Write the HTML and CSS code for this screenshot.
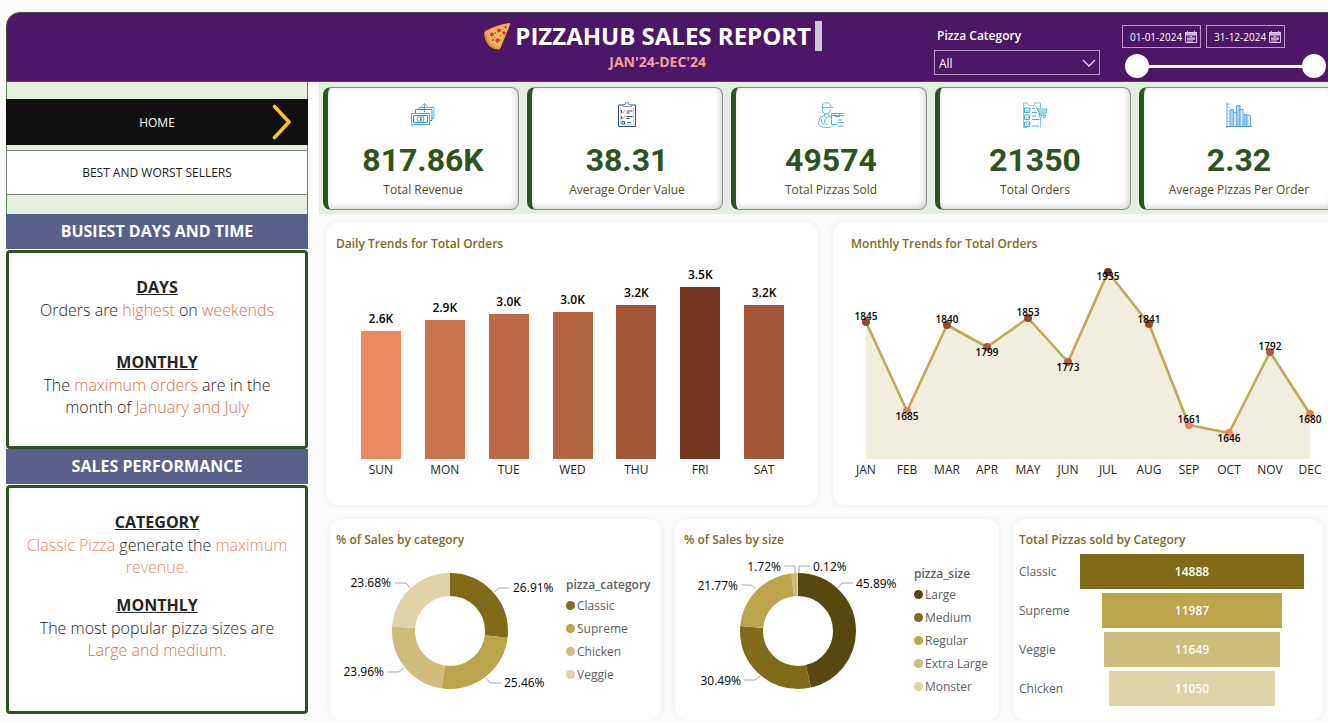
FILE: index.html
```html
<!DOCTYPE html>
<html lang="en">
<head>
<meta charset="utf-8">
<meta name="viewport" content="width=device-width, initial-scale=1">
<title>Pizzahub Sales Report</title>
<link rel="stylesheet" href="styles.css">
</head>
<body>
<div class="dashboard">
  <header class="header">
    <div class="brand">
      <h1 class="brand-title">
        <svg class="brand-icon" viewBox="0 0 28 28" aria-hidden="true">
          <path d="M3 13 C1 12 1 9 3.500 8.500 C10 5 17 2.500 26 1 C27.200 1 27.500 2 27 3 L17.500 26 C16.500 28 14 27.500 13 26.500 C8 25 4 20 3 13Z" fill="#f6a94f"/>
          <path d="M2 10 C3 17 8 24 15 27 C11 28 6 25 3.500 20 C1.500 16.500 .5 12 2 10Z" fill="#dd8a3c"/>
          <path d="M5 11 C6 17 10 22 16 24.500 L26 2Z" fill="#f9b95c"/>
          <g fill="#d33a35"><circle cx="9" cy="12.500" r="2"/><circle cx="14.500" cy="18.500" r="2.200"/><circle cx="16" cy="8.500" r="1.900"/><circle cx="21" cy="11" r="1.700"/><circle cx="22.500" cy="5" r="1.200"/><circle cx="10" cy="18" r="1.100"/></g>
          <g fill="#6c8a35"><circle cx="12.500" cy="11" r=".9"/><circle cx="17.500" cy="13.500" r=".9"/><circle cx="11.500" cy="15.500" r=".8"/><circle cx="19.500" cy="7.500" r=".8"/><circle cx="18" cy="18" r=".8"/></g>
        </svg>
        <span>PIZZAHUB SALES REPORT</span>
        <span class="caret"></span>
      </h1>
      <p class="brand-period">JAN'24-DEC'24</p>
    </div>
    <div class="filter">
      <label class="filter-label" for="category">Pizza Category</label>
      <div class="select-wrap">
        <select id="category" class="select"><option>All</option><option>Classic</option><option>Supreme</option><option>Veggie</option><option>Chicken</option></select>
        <svg class="select-arrow" viewBox="0 0 14 8" aria-hidden="true"><path d="M1 1 L7 7 L13 1" fill="none" stroke="#e8dcf0" stroke-width="1.300"/></svg>
      </div>
    </div>
    <div class="dates">
      <div class="date-row">
        <div class="date-field">
          <input class="date-input" type="text" value="01-01-2024" aria-label="Start date">
          <svg class="date-icon" viewBox="0 0 12 12" aria-hidden="true"><path d="M0 1h12v3H0z" fill="#c9a9da"/><path d="M.5 1.500h11v10H.5zM.5 4h11M2.500 0v2.500M9.500 0v2.500M3 11V5.500M5 11V5.500h2V11M9 5.500V9M2 8h8" fill="none" stroke="#e3c9ee"/></svg>
        </div>
        <div class="date-field">
          <input class="date-input" type="text" value="31-12-2024" aria-label="End date">
          <svg class="date-icon" viewBox="0 0 12 12" aria-hidden="true"><path d="M0 1h12v3H0z" fill="#c9a9da"/><path d="M.5 1.500h11v10H.5zM.5 4h11M2.500 0v2.500M9.500 0v2.500M3 11V5.500M5 11V5.500h2V11M9 5.500V9M2 8h8" fill="none" stroke="#e3c9ee"/></svg>
        </div>
      </div>
      <div class="slider">
        <input class="range" type="range" min="0" max="365" value="0" aria-label="Range start">
        <input class="range" type="range" min="0" max="365" value="365" aria-label="Range end">
      </div>
    </div>
  </header>

  <div class="body">
    <aside class="sidebar">
      <nav class="nav">
        <button class="nav-btn nav-btn-active" type="button">HOME
          <svg class="nav-arrow" viewBox="0 0 20 36" aria-hidden="true"><path d="M2.500 2.500 L17 18 L2.500 33.500" fill="none" stroke="#f8c51c" stroke-width="3.600" stroke-linecap="round" stroke-linejoin="round"/></svg>
        </button>
        <button class="nav-btn" type="button">BEST AND WORST SELLERS</button>
      </nav>
      <h2 class="side-title">BUSIEST DAYS AND TIME</h2>
      <section class="note note-busiest">
        <h3 class="note-title">DAYS</h3>
        <p>Orders are <em>highest</em> on <em>weekends</em></p>
        <h3 class="note-title">MONTHLY</h3>
        <p>The <em>maximum orders</em> are in the<br>month of <em>January and July</em></p>
      </section>
      <h2 class="side-title">SALES PERFORMANCE</h2>
      <section class="note note-sales">
        <h3 class="note-title">CATEGORY</h3>
        <p><em class="soft">Classic Pizza</em> generate the <em class="soft">maximum<br>revenue.</em></p>
        <h3 class="note-title">MONTHLY</h3>
        <p>The most popular pizza sizes are<br><em>Large and medium.</em></p>
      </section>
    </aside>

    <main class="main">
      <section class="kpis">
        <article class="kpi">
          <svg class="kpi-icon" viewBox="0 0 26 26" fill="none" stroke="#4aa8d8" aria-hidden="true"><path d="M1.500 11.500h18v11h-18z"/><path d="M5.500 11V7.500h16.500v11h-2.500M3.500 20.500v-7h14v7z" stroke="#2f93c8"/><path d="M9 7V5.500h15v11h-2.500" stroke="#5ab5e2"/><path d="M14.500 10V2.500M11.500 4.500l3-3 3 3"/><circle cx="10.500" cy="17" r="3.500"/><path d="M12 15.500h-2v1.500h1.500v1.500h-2M10.500 14.500v5"/><path d="M1.500 20v4h2" stroke="#8ccbea"/></svg>
          <strong class="kpi-value">817.86K</strong><span class="kpi-label">Total Revenue</span>
        </article>
        <article class="kpi">
          <svg class="kpi-icon" viewBox="0 0 26 26" fill="none" stroke="#33487f" aria-hidden="true"><path d="M9 3H4.500v21.500h17V3H17"/><path d="M9 4.500V2.500h2.500V.7h3v1.800H17v2z" stroke="#7e8db5"/><path d="M6.500 5v17.500h13V5" stroke="#c3cce2" stroke-width=".8"/><path d="M12.500 9h6M12.500 11h3M12.500 14.500h6M12.500 16.500h3M13.500 20.500h3.500"/><path d="M7.500 10l1.200 1.200 2.500-3.200M7.500 15.500l1.200 1.200 2.500-3.200" stroke="#e08a7c"/><path d="M7.500 8v3M7.500 14v3M8 19.500h2.500v2.500H8z" stroke="#4a4f6a"/></svg>
          <strong class="kpi-value">38.31</strong><span class="kpi-label">Average Order Value</span>
        </article>
        <article class="kpi">
          <svg class="kpi-icon" viewBox="0 0 26 26" fill="none" stroke="#45b8d2" aria-hidden="true"><path d="M4 5.500C4 2.500 6 .7 8.500 .7S12 2 12.500 4.500l2.500 1.200M4 5.500h8.500"/><path d="M4.500 6v2.500C5 11 6.500 12 8.500 12s3.500-1.500 3.500-4.500M6.500 12v2l2 2 2.500-2v-2M6.500 13.500C2.500 14 .7 17 .7 22c0 2.500 5 3.500 8.300 3.500 4 0 5.500-1 6-2M3.500 17c-.5 3 .5 5 3 6M7.500 16.500c-2 3.500-.5 6 2 6.500"/><path d="M26 11.500H13.500v11H19M13.500 13.500H26M17 11.500v3h4.500v-3M19 22.500l2-2h5M20 24h5.500M20 18h4M11 14l2.500 2"/></svg>
          <strong class="kpi-value">49574</strong><span class="kpi-label">Total Pizzas Sold</span>
        </article>
        <article class="kpi">
          <svg class="kpi-icon" viewBox="0 0 26 26" fill="none" stroke="#3fb3cd" aria-hidden="true"><path d="M6 1H1.500v24.500H5M12 1h6.500v5M18.500 16v9.500M5 1.500l2 2h4.500l2-2.500" stroke="#7dcbdc"/><path d="M2.500 6h5v4.500h-5zM2.500 13h5v4.500h-5zM2.500 20h5v4.500h-5zM10 10.500h5M10 17.500h7.500M10 24h7M10 6.500h3M10 14h4"/><path d="M4 8l1.500 1.500L8.500 6M4 15l1.500 1.500L8.500 13M4 22l1.500 1.500L8.500 20" stroke="#5bb9e0"/><path d="M14 5l2 2h9l-1 4h-7l-1.500-4M17.500 11v2h6.500M16.500 9h7"/><circle cx="18.500" cy="14.500" r="1.200"/><circle cx="22.500" cy="14.500" r="1.200"/></svg>
          <strong class="kpi-value">21350</strong><span class="kpi-label">Total Orders</span>
        </article>
        <article class="kpi">
          <svg class="kpi-icon" viewBox="0 0 26 26" fill="none" stroke="#64aae6" aria-hidden="true"><path d="M4 7.500h3.500v17H4zM10.500 3.500h3.500v21h-3.500zM18 12.500h3v12h-3z" fill="#9fd0f6"/><path d="M7.500 10.500h3v14h-3zM14 7.500h3v17h-3zM21 13.500h3.500v11H21z" fill="#d9edfc"/><path d="M1 .5V26M0 24.500h26" stroke="#5f9ed4"/><path d="M2 2h1.500M2 5.500h1.500M2 9h1.500M2 12.500h1.500M2 16h1.500M2 19.500h1.500" stroke="#7fb4e0"/></svg>
          <strong class="kpi-value">2.32</strong><span class="kpi-label">Average Pizzas Per Order</span>
        </article>
      </section>

      <div class="row row-trends">
        <section class="panel panel-daily">
          <h2 class="panel-title">Daily Trends for Total Orders</h2>
          <div class="bars">
            <div class="bar-col"><span class="bar-value">2.6K</span><div class="bar" style="height:128px;background:#eb895f"></div><span class="bar-day">SUN</span></div>
            <div class="bar-col"><span class="bar-value">2.9K</span><div class="bar" style="height:139px;background:#ca724c"></div><span class="bar-day">MON</span></div>
            <div class="bar-col"><span class="bar-value">3.0K</span><div class="bar" style="height:145px;background:#bb6845"></div><span class="bar-day">TUE</span></div>
            <div class="bar-col"><span class="bar-value">3.0K</span><div class="bar" style="height:147px;background:#b46441"></div><span class="bar-day">WED</span></div>
            <div class="bar-col"><span class="bar-value">3.2K</span><div class="bar" style="height:154px;background:#a35737"></div><span class="bar-day">THU</span></div>
            <div class="bar-col"><span class="bar-value">3.5K</span><div class="bar" style="height:172px;background:#73341d"></div><span class="bar-day">FRI</span></div>
            <div class="bar-col"><span class="bar-value">3.2K</span><div class="bar" style="height:154px;background:#a45838"></div><span class="bar-day">SAT</span></div>
          </div>
        </section>
        <section class="panel panel-monthly">
          <h2 class="panel-title">Monthly Trends for Total Orders</h2>
          <svg class="line-chart" viewBox="0 0 505 230" role="img" aria-label="Monthly total orders">
            <path d="M33 66 L74 155 L114 69 L154 91 L195 62 L235 106 L275 16 L316 68 L356 169 L396 177 L437 96 L477 158 V203 H33Z" fill="#f2eedd"/>
            <path d="M33 66 L74 155 L114 69 L154 91 L195 62 L235 106 L275 16 L316 68 L356 169 L396 177 L437 96 L477 158" fill="none" stroke="#bda956" stroke-width="2.600" stroke-linejoin="round"/>
            <g><circle cx="33" cy="66" r="4" fill="#93492d"/><circle cx="74" cy="155" r="4" fill="#de7f56"/><circle cx="114" cy="69" r="4" fill="#954b2e"/><circle cx="154" cy="91" r="4" fill="#a85b3a"/><circle cx="195" cy="62" r="4" fill="#90472b"/><circle cx="235" cy="106" r="4" fill="#b36340"/><circle cx="275" cy="16" r="4" fill="#73341d"/><circle cx="316" cy="68" r="4" fill="#954b2e"/><circle cx="356" cy="169" r="4" fill="#e6855b"/><circle cx="396" cy="177" r="4" fill="#eb895f"/><circle cx="437" cy="96" r="4" fill="#ab5d3c"/><circle cx="477" cy="158" r="4" fill="#df8057"/></g>
            <g class="point-labels"><text x="33" y="64">1845</text><text x="74" y="164">1685</text><text x="114" y="67">1840</text><text x="154" y="100">1799</text><text x="195" y="60">1853</text><text x="235" y="115">1773</text><text x="275" y="24">1935</text><text x="316" y="67">1841</text><text x="356" y="167">1661</text><text x="396" y="186">1646</text><text x="437" y="94">1792</text><text x="477" y="167">1680</text></g>
            <g class="axis-labels"><text x="33" y="218">JAN</text><text x="74" y="218">FEB</text><text x="114" y="218">MAR</text><text x="154" y="218">APR</text><text x="195" y="218">MAY</text><text x="235" y="218">JUN</text><text x="275" y="218">JUL</text><text x="316" y="218">AUG</text><text x="356" y="218">SEP</text><text x="396" y="218">OCT</text><text x="437" y="218">NOV</text><text x="477" y="218">DEC</text></g>
          </svg>
        </section>
      </div>

      <div class="row row-shares">
        <section class="panel panel-share">
          <h2 class="panel-title">% of Sales by category</h2>
          <div class="share">
            <svg class="donut" viewBox="-114 -72 230 144" role="img" aria-label="Sales share by category">
              <g transform="rotate(-90)" fill="none" stroke-width="23">
                <circle r="46.500" pathLength="100" stroke="#806b18" stroke-dasharray="26.910 100"/>
                <circle r="46.500" pathLength="100" stroke="#bba449" stroke-dasharray="25.460 100" stroke-dashoffset="-26.910"/>
                <circle r="46.500" pathLength="100" stroke="#cdbc7a" stroke-dasharray="23.960 100" stroke-dashoffset="-52.370"/>
                <circle r="46.500" pathLength="100" stroke="#ded2a6" stroke-dasharray="23.680 100" stroke-dashoffset="-76.330"/>
              </g>
              <path class="leader" d="M44 -39l5 -4h10M36 47l4 5h11M-46 37l-5 4h-11M-40 -43l-4 -5h-11"/>
              <g class="share-labels"><text x="63" y="-39">26.91%</text><text x="54" y="56">25.46%</text><text class="end" x="-66" y="45">23.96%</text><text class="end" x="-59" y="-44">23.68%</text></g>
            </svg>
            <div class="legend">
              <h3 class="legend-title">pizza_category</h3>
              <ul class="legend-list">
                <li><i class="dot tone-2"></i>Classic</li><li><i class="dot tone-3"></i>Supreme</li><li><i class="dot tone-4"></i>Chicken</li><li><i class="dot tone-5"></i>Veggie</li>
              </ul>
            </div>
          </div>
        </section>
        <section class="panel panel-share panel-size">
          <h2 class="panel-title">% of Sales by size</h2>
          <div class="share">
            <svg class="donut" viewBox="-114 -72 230 144" role="img" aria-label="Sales share by size">
              <g transform="rotate(-90)" fill="none" stroke-width="23">
                <circle r="46.500" pathLength="100" stroke="#574810" stroke-dasharray="46.390 100"/>
                <circle r="46.500" pathLength="100" stroke="#806b18" stroke-dasharray="29.990 100" stroke-dashoffset="-46.390"/>
                <circle r="46.500" pathLength="100" stroke="#bba449" stroke-dasharray="21.770 100" stroke-dashoffset="-76.380"/>
                <circle r="46.500" pathLength="100" stroke="#cdbc7a" stroke-dasharray="1.720 100" stroke-dashoffset="-98.150"/>
                <circle r="46.500" pathLength="100" stroke="#ded2a6" stroke-dasharray=".13 100" stroke-dashoffset="-99.870"/>
              </g>
              <path class="leader" d="M40 -43l4 -5h11M1 -58v-7h11M-3 -58v-7h-11M-42 -42l-5 -4h-10M-38 45l-5 4h-11"/>
              <g class="share-labels"><text x="58" y="-43">45.89%</text><text x="15" y="-60">0.12%</text><text class="end" x="-17" y="-60">1.72%</text><text class="end" x="-60" y="-41">21.77%</text><text class="end" x="-57" y="54">30.49%</text></g>
            </svg>
            <div class="legend">
              <h3 class="legend-title">pizza_size</h3>
              <ul class="legend-list">
                <li><i class="dot tone-1"></i>Large</li><li><i class="dot tone-2"></i>Medium</li><li><i class="dot tone-3"></i>Regular</li><li><i class="dot tone-4"></i>Extra Large</li><li><i class="dot tone-5"></i>Monster</li>
              </ul>
            </div>
          </div>
        </section>
        <section class="panel panel-share">
          <h2 class="panel-title">Total Pizzas sold by Category</h2>
          <div class="funnel">
            <span class="funnel-name">Classic</span><div class="funnel-track"><div class="funnel-bar tone-2" style="width:100%">14888</div></div>
            <span class="funnel-name">Supreme</span><div class="funnel-track"><div class="funnel-bar tone-3" style="width:80.5%">11987</div></div>
            <span class="funnel-name">Veggie</span><div class="funnel-track"><div class="funnel-bar tone-4" style="width:78.2%">11649</div></div>
            <span class="funnel-name">Chicken</span><div class="funnel-track"><div class="funnel-bar tone-5" style="width:74.2%">11050</div></div>
          </div>
        </section>
      </div>
    </main>
  </div>
</div>
</body>
</html>
```

FILE: styles.css
```css
* { box-sizing: border-box; }

body {
  margin: 0;
  overflow: hidden;
  background: #fcfcfc;
  color: #252423;
  font-family: "Open Sans", "Noto Sans", sans-serif;
  font-size: 12px;
}

h1, h2, h3, p, ul { margin: 0; padding: 0; }
ul { list-style: none; }
em { font-style: normal; color: #d8704a; }
em.soft { color: #df8a6c; }
button, input, select { font: inherit; color: inherit; }

/* The report canvas runs slightly past the right edge of the window. */
.dashboard { margin: 12px -10px 0 6px; }

/* Header */
.header {
  display: flex;
  align-items: flex-start;
  height: 70px;
  padding-right: 11px;
  background: #4c1767;
  border: 1px solid #45503c;
  border-radius: 14px 0 0 0;
  color: #fff;
}
.brand { margin-left: auto; padding-top: 8px; }
.brand-title {
  display: flex;
  align-items: center;
  gap: 4px;
  font-size: 24px;
  font-weight: 700;
  line-height: 30px;
  white-space: nowrap;
}
.brand-icon { width: 28px; height: 28px; }
.caret { width: 7px; height: 30px; background: #cbc6cf; }
.brand-period {
  padding-left: 10px;
  text-align: center;
  font-size: 14px;
  font-weight: 700;
  line-height: 22px;
  color: #f0a294;
}
.filter { width: 166px; margin: 14px 22px 0 112px; }
.filter-label {
  display: block;
  padding-left: 3px;
  font-weight: 600;
  line-height: 18px;
}
.select-wrap { position: relative; margin-top: 5px; }
.select {
  display: block;
  width: 100%;
  height: 25px;
  padding: 2px 4px 0;
  appearance: none;
  background: transparent;
  border: 1px solid #b79bc6;
  border-radius: 0;
}
.select-arrow { position: absolute; right: 4px; top: 9px; width: 14px; height: 8px; }
.dates { width: 204px; padding-top: 12px; }
.date-row { display: flex; gap: 5px; }
.date-field {
  display: flex;
  align-items: center;
  width: 79px;
  height: 23px;
  padding: 0 3px 0 7px;
  border: 1px solid #b79bc6;
}
.date-input {
  flex: 1;
  min-width: 0;
  padding: 0;
  border: 0;
  background: transparent;
  font-size: 10px;
}
.date-icon { width: 12px; height: 12px; }
.slider { display: grid; margin: 6px 0 0 3px; }
.range {
  grid-area: 1 / 1;
  width: 100%;
  height: 24px;
  margin: 0;
  appearance: none;
  background: linear-gradient(#fff, #fff) center / 90% 3px no-repeat;
  pointer-events: none;
}
.range::-webkit-slider-thumb {
  appearance: none;
  width: 24px;
  height: 24px;
  border-radius: 50%;
  background: #fff;
  pointer-events: auto;
}

/* Columns below the header */
.body { display: grid; grid-template-columns: 302px minmax(0, 1fr); column-gap: 11px; }

/* Sidebar */
.nav {
  display: grid;
  gap: 5px;
  padding: 17px 0 19px;
  background: #e4efdf;
  box-shadow: inset 1px 0 #5b8a4e, inset -1px 0 #5b8a4e;
}
.nav-btn {
  position: relative;
  height: 45px;
  padding: 0;
  border: 1px solid #7a7d78;
  background: #fff;
  color: #1b1a19;
}
.nav-btn-active { height: 46px; border-color: #101010; background: #101010; color: #fff; }
.nav-arrow { position: absolute; right: 15px; top: 4px; width: 20px; height: 36px; }
.side-title {
  margin-bottom: 1px;
  background: #59608a;
  color: #fff;
  text-align: center;
  font-size: 16px;
  font-weight: 700;
  line-height: 35px;
}
.note {
  padding: 23px 8px 28px;
  border: 3px solid #2d5320;
  border-radius: 4px;
  background: #fff;
  text-align: center;
  font-size: 16px;
  font-weight: 360;
  line-height: 22px;
  white-space: nowrap;
}
.note-sales { padding-bottom: 50px; }
.note-title { font-size: 16px; font-weight: 700; line-height: 23px; text-decoration: underline; }
.note-busiest p + .note-title { margin-top: 30px; }
.note-sales p + .note-title { margin-top: 16px; }

/* KPI strip */
.kpis {
  display: grid;
  grid-template-columns: repeat(5, minmax(0, 1fr));
  gap: 8px;
  padding: 5px 3px 4px 4px;
  background: #e4efdf;
}
.kpi {
  display: flex;
  flex-direction: column;
  align-items: center;
  padding: 14px 0 9px;
  border: 1px solid #8b8b8b;
  border-left: 5px solid #2d5320;
  border-radius: 8px;
  background: #fff;
  box-shadow: inset -2px -2px 6px #d4d4d4;
}
.kpi-icon { width: 26px; height: 26px; }
.kpi-value {
  margin-top: 14px;
  font-family: Roboto, "Open Sans", sans-serif;
  font-size: 32px;
  font-weight: 700;
  line-height: 36px;
  color: #2d5320;
}
.kpi-label { margin-top: 2px; line-height: 20px; font-weight: 500; color: #54491c; }

/* Chart panels */
.row { display: grid; }
.row-trends { grid-template-columns: 492fr 505fr; gap: 15px; padding: 8px 0 0 7px; }
.row-shares { grid-template-columns: 331fr 324fr 310fr; gap: 14px; padding: 14px 15px 0 11px; }
.panel { border-radius: 12px; background: #fff; box-shadow: 0 0 6px #ececec; }
.panel-title { font-size: 12px; font-weight: 600; line-height: 18px; color: #7b6a26; }
.panel-daily { padding: 13px 22px 24px 23px; }
.panel-daily .panel-title { margin-left: -13px; }
.bars { display: flex; align-items: flex-end; height: 228px; }
.bar-col { flex: 1; display: flex; flex-direction: column; align-items: center; }
.bar-value { line-height: 17px; margin-bottom: 4px; font-weight: 600; color: #000; }
.bar { width: 40px; }
.bar-day { line-height: 22px; font-weight: 500; }
.panel-monthly { padding-top: 13px; }
.panel-monthly .panel-title { padding-left: 18px; }
.line-chart { display: block; width: 100%; margin-top: 3px; }
.line-chart text { text-anchor: middle; }
.point-labels { font-size: 10px; font-weight: 600; fill: #000; }
.axis-labels { font-size: 12px; font-weight: 500; fill: #252423; }

.panel-share { padding: 12px 6px 14px; }
.panel-size { padding-left: 9px; }
.share { display: flex; align-items: center; margin-top: 10px; }
.donut { width: 230px; flex: none; }
.leader { fill: none; stroke: #a6a6a6; stroke-width: 1; }
.share-labels { font-size: 12px; font-weight: 500; fill: #000; }
.share-labels .end { text-anchor: end; }
.legend-title { font-size: 12px; font-weight: 600; line-height: 18px; color: #605e5c; }
.legend-list { line-height: 23px; color: #605e5c; white-space: nowrap; }
.legend-list li { display: flex; align-items: center; gap: 2px; }
.dot { width: 9px; height: 9px; border-radius: 50%; }
.tone-1 { background: #574810; }
.tone-2 { background: #806b18; }
.tone-3 { background: #bba449; }
.tone-4 { background: #cdbc7a; }
.tone-5 { background: #ded2a6; }

.funnel {
  display: grid;
  grid-template-columns: 61px minmax(0, 1fr);
  gap: 4px 0;
  padding: 5px 13px 0 0;
  line-height: 35px;
}
.funnel-name { font-weight: 500; color: #605e5c; }
.funnel-bar { margin: 0 auto; text-align: center; font-weight: 600; color: #fff; }
```
